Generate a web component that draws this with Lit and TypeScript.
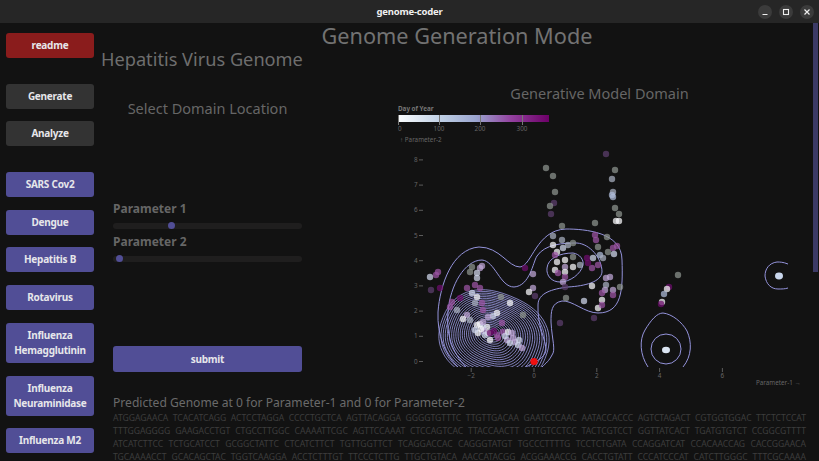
import { LitElement, html, svg, css } from 'lit';
import { customElement } from 'lit/decorators.js';

const VIRUSES = ['SARS Cov2', 'Dengue', 'Hepatitis B', 'Rotavirus', 'Influenza Hemagglutinin', 'Influenza Neuraminidase', 'Influenza M2'];

const GENOME = [
  'ATGGAGAACA TCACATCAGG ACTCCTAGGA CCCCTGCTCA AGTTACAGGA GGGGTGTTTC TTGTTGACAA GAATCCCAAC AATACCACCC AGTCTAGACT CGTGGTGGAC TTCTCTCCAT',
  'TTTGGAGGGG GAAGACCTGT CTGCCTTGGC CAAAATTCGC AGTTCCAAAT CTCCAGTCAC TTACCAACTT GTTGTCCTCC TACTCGTCCT GGTTATCACT TGATGTGTCT CCGGCGTTTT',
  'ATCATCTTCC TCTGCATCCT GCGGCTATTC CTCATCTTCT TGTTGGTTCT TCAGGACCAC CAGGGTATGT TGCCCTTTTG TCCTCTGATA CCAGGATCAT CCACAACCAG CACCGGAACA',
  'TGCAAAACCT GCACAGCTAC TGGTCAAGGA ACCTCTTTGT TTCCCTCTTG TTGCTGTACA AACCATACGG ACGGAAACCG CACCTGTATT CCCATCCCAT CATCTTGGGC TTTCGCAAAA',
];

// point colours: white, light, blue-grey, grey, soft grey, lavender, purple, dim purple, dark
const C: Record<string, string> = {
  w: '#fbfbfe', l: '#d3daee', b: '#aebcda', g: '#8d948f', h: '#a9b0c0', v: '#c0a8d8', p: '#9c55a5', d: '#5d3f6e', k: '#6d0d6d',
};

const POINTS: [number, number, string][] = [
  [546, 168, 'g'], [553, 176, 'g'], [555, 192, 'g'], [554, 203, 'd'], [550, 206, 'g'], [551, 214, 'd'], [606, 154, 'd'],
  [615, 170, 'g'], [612, 179, 'h'], [613, 192, 'h'], [613, 197, 'b'], [612, 195, 'b'], [615, 208, 'g'], [619, 214, 'g'],
  [616, 221, 'w'], [619, 221, 'w'], [595, 223, 'g'], [562, 226, 'g'],
  [553, 236, 'h'], [553, 245, 'w'], [557, 252, 'w'], [562, 240, 'h'], [563, 248, 'l'], [555, 255, 'p'], [568, 245, 'h'],
  [573, 243, 'g'], [565, 260, 'w'], [557, 262, 'w'], [555, 270, 'w'], [565, 267, 'v'], [565, 272, 'w'], [573, 267, 'w'],
  [580, 265, 'h'], [573, 257, 'g'], [558, 273, 'p'], [565, 277, 'p'], [563, 282, 'v'], [587, 258, 'k'], [593, 258, 'l'],
  [600, 255, 'b'], [598, 265, 'p'], [592, 268, 'p'], [595, 235, 'p'], [596, 240, 'p'], [598, 247, 'g'], [608, 252, 'g'],
  [607, 237, 'g'], [617, 246, 'p'], [613, 248, 'p'], [614, 254, 'l'], [603, 258, 'h'], [588, 263, 'k'], [610, 277, 'v'],
  [606, 278, 'v'], [606, 285, 'h'], [605, 290, 'v'], [620, 287, 'g'], [613, 290, 'v'], [613, 295, 'p'], [602, 293, 'p'],
  [602, 300, 'w'], [598, 308, 'w'], [602, 305, 'p'], [592, 286, 'w'], [584, 301, 'l'], [566, 298, 'g'], [565, 287, 'd'],
  [533, 274, 'v'], [533, 288, 'v'], [529, 292, 'w'], [535, 296, 'd'], [525, 268, 'k'], [594, 318, 'd'], [560, 323, 'd'],
  [430, 277, 'l'], [438, 272, 'p'], [436, 275, 'p'], [431, 290, 'd'], [440, 288, 'k'], [472, 267, 'g'], [470, 272, 'g'],
  [480, 268, 'v'], [482, 266, 'v'], [477, 273, 'l'], [477, 278, 'l'], [475, 285, 'p'], [480, 288, 'p'], [467, 288, 'p'],
  [472, 293, 'l'], [477, 297, 'w'], [460, 298, 'k'], [452, 302, 'p'], [450, 307, 'p'], [457, 310, 'h'], [510, 303, 'w'],
  [482, 303, 'p'], [475, 303, 'h'], [483, 310, 'p'], [501, 297, 'g'], [467, 315, 'v'], [463, 319, 'w'], [470, 320, 'h'],
  [497, 313, 'w'], [493, 316, 'l'], [488, 317, 'v'], [477, 325, 'w'], [480, 324, 'w'], [487, 327, 'w'], [478, 333, 'w'],
  [488, 333, 'w'], [497, 335, 'p'], [503, 332, 'p'], [508, 332, 'w'], [512, 333, 'v'], [502, 323, 'p'],
  [490, 340, 'w'], [498, 338, 'p'], [507, 340, 'v'], [515, 342, 'v'], [518, 345, 'l'], [522, 348, 'v'], [510, 343, 'l'],
  [523, 315, 'g'], [483, 327, 'l'], [484, 331, 'v'], [481, 329, 'w'], [485, 335, 'l'], [475, 330, 'l'], [483, 322, 'v'],
  [513, 338, 'v'], [519, 340, 'l'], [505, 336, 'l'], [494, 331, 'k'], [490, 333, 'k'],
  [678, 275, 'g'], [669, 287, 'k'], [667, 289, 'w'], [664, 294, 'b'], [662, 302, 'w'], [661, 304, 'k'],
];

// the outer levels of the density contours, by hand
const OUTER = [
  'M458 367C445 355 437 335 438 312C440 285 452 249 479 247C500 247 508 267 520 267C532 266 536 230 566 229C585 229 622 232 622 260C623 290 622 313 598 313C585 313 572 300 562 301C551 303 551 312 551 322C552 340 556 350 552 355C549 361 546 363 542 367',
  'M466 367C452 352 446 335 448 312C450 285 465 260 482 260C495 261 500 287 514 287C530 286 533 262 537 256C545 244 563 243 577 243C590 244 602 258 602 272C601 282 585 286 568 287C552 289 538 293 538 305C537 325 546 340 546 350C546 358 532 363 526 367',
  'M547 268C548 258 560 253 573 253C580 254 584 260 583 265C581 274 570 282 560 282C552 282 546 276 547 268Z',
  'M648 367C640 355 639 340 645 330C651 320 657 313 663 313C672 314 682 322 687 331C692 342 692 356 683 367',
  'M788 264C783 262 780 262 777 262C769 263 765 269 765 276C766 284 771 289 778 289C782 289 785 289 788 288',
];

/** Nested rounded contours round the main density peak. */
function peakContours() {
  const out: string[] = [];
  const levels = 24;
  for (let i = 0; i < levels; i++) {
    const k = 1 - i / (levels + 0.5);
    const cx = 491 + 3 * k;
    const cy = 332 + 6 * k;
    const rx = 55 * k;
    const ry = 45 * k;
    const tilt = 0.38;
    const pts: string[] = [];
    for (let a = 0; a < 60; a++) {
      const t = (a / 60) * Math.PI * 2;
      const c = Math.cos(t);
      const s = Math.sin(t);
      const x = rx * Math.sign(c) * Math.abs(c) ** 0.85;
      const y = ry * Math.sign(s) * Math.abs(s) ** 0.85;
      const px = cx + x * Math.cos(tilt) - y * Math.sin(tilt);
      const py = cy + x * Math.sin(tilt) + y * Math.cos(tilt);
      pts.push(`${px.toFixed(1)} ${py.toFixed(1)}`);
    }
    out.push(`M${pts.join('L')}Z`);
  }
  return out;
}

const Y_TICKS = [0, 1, 2, 3, 4, 5, 6, 7, 8];
const X_TICKS = [-2, 0, 2, 4, 6];

@customElement('density-chart')
export class DensityChart extends LitElement {
  static override styles = css`
    :host {
      display: block;
    }
    svg {
      display: block;
    }
    text {
      font-family: 'Noto Sans', sans-serif;
      font-size: 6.3px;
      fill: #666;
    }
    .legend-title {
      font-weight: 700;
      fill: #777;
    }
    .contour {
      fill: none;
      stroke: #9594dc;
      stroke-width: 1;
    }
    .peak {
      stroke: #9695dc;
      stroke-width: 0.85;
    }
    .tick {
      stroke: #5c5c5c;
      stroke-width: 1;
    }
    .soft {
      filter: blur(0.35px);
    }
  `;

  override render() {
    return html`
      <svg width="427" height="285" viewBox="386 105 427 285">
        <defs>
          <linearGradient id="doy">
            <stop offset="0" stop-color="#fbfdfe"></stop>
            <stop offset="0.3" stop-color="#bccde3"></stop>
            <stop offset="0.52" stop-color="#9aa4cf"></stop>
            <stop offset="0.75" stop-color="#93419f"></stop>
            <stop offset="1" stop-color="#6d0068"></stop>
          </linearGradient>
          <clipPath id="plot"><rect x="400" y="150" width="388" height="217"></rect></clipPath>
        </defs>

        <text class="legend-title" x="398" y="111">Day of Year</text>
        <rect x="398" y="115" width="151" height="7" fill="url(#doy)"></rect>
        ${[398, 439, 480, 522].map(
          (x, i) => svg`
            <line x1=${x + 0.5} x2=${x + 0.5} y1="115" y2="125" stroke="#777"></line>
            <text x=${x} y="131" text-anchor=${i ? 'middle' : 'start'}>${i * 100}</text>`,
        )}
        <text x="400" y="142">↑ Parameter-2</text>

        ${Y_TICKS.map((v) => {
          const y = 361.5 - v * 25.2;
          return svg`
            <text x="414" y=${y + 2} text-anchor="start">${v}</text>
            <line class="tick" x1="419" x2="423" y1=${y} y2=${y}></line>`;
        })}
        ${X_TICKS.map((v) => {
          const x = 534 + v * 31.4;
          return svg`
            <line class="tick" x1=${x} x2=${x} y1="368" y2="372"></line>
            <text x=${x} y="378" text-anchor="middle">${v < 0 ? `−${-v}` : v}</text>`;
        })}
        <text x="756" y="385">Parameter-1 →</text>

        <g clip-path="url(#plot)">
          <g class="soft">
            ${OUTER.map((d) => svg`<path class="contour" d=${d}></path>`)}
            ${peakContours().map((d) => svg`<path class="contour peak" d=${d}></path>`)}
            <circle class="contour" cx="666" cy="349" r="15"></circle>
            ${POINTS.map(([x, y, c]) => svg`<circle cx=${x} cy=${y} r="3.2" fill=${C[c]} opacity="0.72"></circle>`)}
            <ellipse cx="666" cy="350" rx="4" ry="3.2" fill="#dbe4f2"></ellipse>
            <ellipse cx="779" cy="276" rx="4" ry="3.4" fill="#c9d6ec"></ellipse>
            <circle cx="534" cy="361.5" r="3.6" fill="#f01010"></circle>
          </g>
        </g>
      </svg>
    `;
  }
}

@customElement('app-root')
export class AppRoot extends LitElement {
  static override styles = css`
    :host {
      display: block;
      position: relative;
      width: 819px;
      height: 461px;
      overflow: hidden;
      background: #121212;
      font-family: 'Noto Sans', sans-serif;
    }

    .titlebar {
      height: 23px;
      background: #262626;
      display: flex;
      align-items: center;
      justify-content: center;
      position: relative;
      color: #f0f0f0;
      font-size: 9.5px;
      letter-spacing: -0.2px;
      font-weight: 700;
    }
    .win-buttons {
      position: absolute;
      right: 5px;
      top: 5px;
      display: flex;
      gap: 7px;
    }
    .win-btn {
      width: 14px;
      height: 14px;
      border-radius: 50%;
      background: #3b3b3b;
      display: block;
    }

    .body {
      display: flex;
      height: 438px;
    }
    .sidebar {
      width: 88px;
      flex: none;
      margin: 0 7px 0 6px;
      padding-top: 10px;
      display: flex;
      flex-direction: column;
      gap: 12.7px;
    }
    .btn {
      display: flex;
      align-items: center;
      justify-content: center;
      text-align: center;
      min-height: 25px;
      border-radius: 3px;
      font-size: 10px;
      letter-spacing: -0.25px;
      line-height: 15px;
      font-weight: 700;
      color: #e6e6ea;
      background: #514e96;
      padding: 5px 0;
      box-sizing: border-box;
    }
    .btn.red {
      background: #8a1c1c;
      margin-bottom: 13px;
    }
    .btn.dark {
      background: #333333;
    }
    .btn.last-mode {
      margin-bottom: 13px;
    }

    .main {
      flex: 1;
      min-width: 0;
      color: #6c6c6c;
      padding-right: 6px;
    }
    h1 {
      margin: 0;
      font-size: 21.7px;
      line-height: 26px;
      font-weight: 400;
      text-align: center;
      color: #727272;
    }
    h2 {
      margin: -3px 0 0;
      font-size: 18.2px;
      line-height: 26px;
      font-weight: 400;
      color: #6e6e6e;
    }
    h3 {
      margin: 0;
      font-size: 14.5px;
      line-height: 20px;
      font-weight: 400;
      text-align: center;
      color: #666;
    }

    .columns {
      display: flex;
      height: 322px;
    }
    .controls {
      width: 189px;
      margin-left: 12px;
      padding-top: 26px;
      display: flex;
      flex-direction: column;
    }
    .params {
      margin-top: 81.5px;
    }
    .param-label {
      font-size: 12px;
      line-height: 17px;
      font-weight: 700;
      color: #666;
    }
    .track {
      height: 6px;
      margin: 6px 0 4px;
      border-radius: 3px;
      background: #1f1e1e;
      display: flex;
      align-items: center;
    }
    .thumb {
      width: 7px;
      height: 7px;
      border-radius: 50%;
      background: #514e96;
    }
    .submit {
      margin-top: auto;
      height: 26px;
      min-height: 26px;
      margin-bottom: 22px;
      padding: 0;
    }
    .chart-col {
      flex: 1;
      margin-left: 84px;
      padding-top: 11px;
    }
    .chart-col density-chart {
      margin-top: 2px;
    }

    .predicted {
      margin: 0 7px 0 12px;
    }
    .predicted-title {
      font-size: 12.1px;
      line-height: 18px;
      color: #6a6a6a;
    }
    .genome {
      margin-top: 2px;
      display: flex;
      flex-direction: column;
      gap: 5px;
    }
    .genome-line {
      font-size: 8.6px;
      line-height: 8px;
      color: #3d3d3d;
      text-align: justify;
      text-align-last: justify;
    }

    .scrollbar {
      position: absolute;
      right: 1px;
      top: 23px;
      width: 5px;
      height: 249px;
      background: #3c3a66;
    }
  `;

  override render() {
    return html`
      <div class="titlebar">
        genome-coder
        <div class="win-buttons">
          <svg class="win-btn" viewBox="0 0 14 14"><path d="M4.5 9.5h5" stroke="#eee" stroke-width="1.2"></path></svg>
          <svg class="win-btn" viewBox="0 0 14 14"><rect x="4.5" y="4.5" width="5" height="5" fill="none" stroke="#eee" stroke-width="1.1"></rect></svg>
          <svg class="win-btn" viewBox="0 0 14 14"><path d="M4.5 4.5l5 5M9.5 4.5l-5 5" stroke="#eee" stroke-width="1.2"></path></svg>
        </div>
      </div>
      <div class="body">
        <nav class="sidebar">
          <div class="btn red">readme</div>
          <div class="btn dark">Generate</div>
          <div class="btn dark last-mode">Analyze</div>
          ${VIRUSES.map((v) => html`<div class="btn">${v}</div>`)}
        </nav>
        <div class="main">
          <h1>Genome Generation Mode</h1>
          <h2>Hepatitis Virus Genome</h2>
          <div class="columns">
            <div class="controls">
              <h3>Select Domain Location</h3>
              <div class="params">
                ${[['Parameter 1', 55], ['Parameter 2', 3]].map(
                  ([label, left]) => html`
                    <div class="param-label">${label}</div>
                    <div class="track"><div class="thumb" style="margin-left:${left}px"></div></div>
                  `,
                )}
              </div>
              <div class="btn submit">submit</div>
            </div>
            <div class="chart-col">
              <h3>Generative Model Domain</h3>
              <density-chart></density-chart>
            </div>
          </div>
          <div class="predicted">
            <div class="predicted-title">Predicted Genome at 0 for Parameter-1 and 0 for Parameter-2</div>
            <div class="genome">
              ${GENOME.map((l) => html`<div class="genome-line">${l}</div>`)}
            </div>
          </div>
        </div>
      </div>
      <div class="scrollbar"></div>
    `;
  }
}
